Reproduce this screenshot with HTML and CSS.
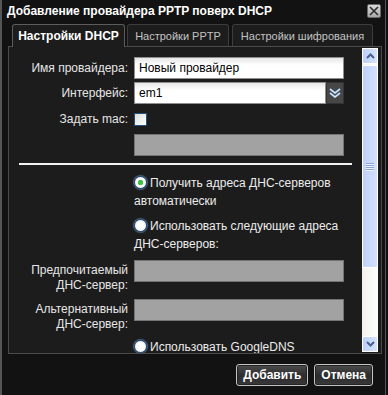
FILE: index.html
```html
<!DOCTYPE html>
<html lang="ru">
<head>
    <meta charset="UTF-8">
    <title>Добавление провайдера PPTP поверх DHCP</title>
    <link rel="stylesheet" href="styles.css">
</head>
<body>
    <div class="dialog">
        <div class="titlebar">
            <span class="title">Добавление провайдера PPTP поверх DHCP</span>
            <span class="close">
                <svg width="12" height="12" viewBox="0 0 12 12">
                    <path d="M2 2 L10 10 M10 2 L2 10" stroke="#2b2b2b" stroke-width="1.6" fill="none"/>
                </svg>
            </span>
        </div>

        <div class="tabs">
            <div class="tab active tab-dhcp">Настройки DHCP</div>
            <div class="tab tab-pptp">Настройки PPTP</div>
            <div class="tab tab-crypt">Настройки шифрования</div>
        </div>

        <div class="panel">
            <div class="content">
                <div class="row">
                    <label>Имя провайдера:</label>
                    <div class="input">Новый провайдер</div>
                </div>
                <div class="row">
                    <label>Интерфейс:</label>
                    <div class="select">
                        <div class="input select-value">em1</div>
                        <span class="select-btn">
                            <svg width="12" height="10" viewBox="0 0 12 10">
                                <path d="M1 1 L6 5 L11 1 M1 5 L6 9 L11 5" stroke="#9cc3ee" stroke-width="2" fill="none"/>
                                <path d="M1 1 L6 5 L11 1 M1 5 L6 9 L11 5" stroke="#ffffff" stroke-width="0.7" fill="none"/>
                            </svg>
                        </span>
                    </div>
                </div>
                <div class="row row-check">
                    <label>Задать mac:</label>
                    <span class="checkbox"></span>
                </div>
                <div class="row">
                    <label></label>
                    <div class="input disabled"></div>
                </div>

                <hr class="divider">

                <div class="row row-option">
                    <label></label>
                    <div class="option"><span class="radio checked"></span>Получить адреса ДНС-серверов автоматически</div>
                </div>
                <div class="row row-option">
                    <label></label>
                    <div class="option"><span class="radio"></span>Использовать следующие адреса ДНС-серверов:</div>
                </div>
                <div class="row row-tall">
                    <label>Предпочитаемый ДНС-сервер:</label>
                    <div class="input disabled"></div>
                </div>
                <div class="row row-tall">
                    <label>Альтернативный ДНС-сервер:</label>
                    <div class="input disabled"></div>
                </div>
                <div class="row row-option">
                    <label></label>
                    <div class="option"><span class="radio"></span>Использовать GoogleDNS</div>
                </div>
            </div>

            <div class="scrollbar">
                <span class="sb-btn">
                    <svg width="9" height="6" viewBox="0 0 9 6">
                        <path d="M1 5 L4.5 1.5 L8 5" stroke="#4d6185" stroke-width="2" fill="none"/>
                    </svg>
                </span>
                <div class="sb-thumb">
                    <span class="grip"></span>
                </div>
                <div class="sb-track"></div>
                <span class="sb-btn">
                    <svg width="9" height="6" viewBox="0 0 9 6">
                        <path d="M1 1 L4.5 4.5 L8 1" stroke="#4d6185" stroke-width="2" fill="none"/>
                    </svg>
                </span>
            </div>
        </div>

        <div class="footer">
            <button>Добавить</button>
            <button>Отмена</button>
        </div>
    </div>
</body>
</html>
```

FILE: styles.css
```css
* {
    box-sizing: border-box;
    margin: 0;
    padding: 0;
}

body {
    background: #111;
    font-family: 'Liberation Sans', sans-serif;
    font-size: 12px;
    color: #e8e8e8;
}

.dialog {
    width: 386px;
    height: 395px;
    background: #121212;
    border-left: 2px solid #555;
    border-right: 1px solid #555;
    display: flex;
    flex-direction: column;
}

/* title */

.titlebar {
    height: 24px;
    padding: 0 4px 2px 5px;
    display: flex;
    align-items: center;
    justify-content: space-between;
}

.title {
    font-weight: bold;
    font-size: 12px;
    color: #fff;
}

.close {
    width: 14px;
    height: 14px;
    border: 1px solid #6a6a6a;
    border-radius: 2px;
    background: linear-gradient(#d8d8d8, #a8a8a8);
    display: flex;
    align-items: center;
    justify-content: center;
}

/* tabs */

.tabs {
    height: 22px;
    padding-left: 10px;
    display: flex;
    gap: 2px;
    position: relative;
    z-index: 1;
}

.tab {
    height: 22px;
    border: 1px solid #3c3c3c;
    border-bottom: none;
    border-radius: 3px 3px 0 0;
    background: #1d1d1d;
    color: #c4c4c4;
    font-size: 11px;
    white-space: nowrap;
    display: flex;
    align-items: center;
    justify-content: center;
}

.tab.active {
    height: 23px;
    border-color: #5c5c5c;
    background: #1c1c1c;
    color: #fff;
    font-size: 12px;
    font-weight: bold;
}

.tab-dhcp {
    width: 113px;
}

.tab-pptp {
    width: 102px;
}

.tab-crypt {
    width: 141px;
    margin-left: 1px;
}

/* panel */

.panel {
    height: 308px;
    margin: 0 3px 0 6px;
    border: 1px solid #4a4a4a;
    background: #1c1c1c;
    display: flex;
}

.content {
    flex: 1;
    overflow: hidden;
    padding-top: 10px;
}

.row {
    display: grid;
    grid-template-columns: 119px 210px;
    column-gap: 6px;
    align-items: center;
    margin-bottom: 3px;
}

.row label {
    text-align: right;
    color: #e6e6e6;
}

.row-check {
    height: 24px;
}

.row-tall {
    align-items: start;
    margin-bottom: 6px;
}

.row-tall label {
    padding-top: 3px;
    line-height: 15px;
}

.row-option {
    align-items: start;
    margin-bottom: 7px;
}

.input {
    height: 22px;
    padding: 0 4px;
    border: 1px solid #8e8e8e;
    background: linear-gradient(#e6e6e6, #fff 35%);
    color: #000;
    font-size: 12px;
    display: flex;
    align-items: center;
}

.input.disabled {
    background: #a2a2a2;
    border-color: #747474;
}

.select {
    display: flex;
}

.select-value {
    flex: 1;
}

.select-btn {
    width: 18px;
    height: 22px;
    background: #474747;
    border: 1px solid #333;
    display: flex;
    align-items: center;
    justify-content: center;
}

.checkbox {
    width: 13px;
    height: 13px;
    border: 1px solid #1c5180;
    background: linear-gradient(135deg, #dcdcd7, #fff);
}

.divider {
    border: none;
    height: 2px;
    background: #f2f2f2;
    margin: 7px 10px 9px 10px;
}

.option {
    line-height: 18px;
    color: #ececec;
}

.radio {
    display: inline-block;
    width: 13px;
    height: 13px;
    margin-right: 3px;
    vertical-align: -2px;
    border-radius: 50%;
    border: 1px solid #2f5a8a;
    background: radial-gradient(circle, #fff 40%, #dadada);
    box-shadow: 0 0 1px 1px #49627e;
}

.radio.checked {
    background: radial-gradient(circle, #3fc13f 0 2.5px, #ffffff 3px 45%, #dadada);
}

/* scrollbar */

.scrollbar {
    width: 16px;
    margin: 1px 3px 1px 0;
    display: flex;
    flex-direction: column;
    background: linear-gradient(to right, #f3f1ec, #fefefe);
}

.sb-btn {
    height: 16px;
    border: 1px solid #fff;
    border-radius: 2px;
    background: linear-gradient(to right, #bcd0fb, #d6e2fd);
    display: flex;
    align-items: center;
    justify-content: center;
}

.sb-thumb {
    height: 203px;
    margin-top: 1px;
    border: 1px solid #fff;
    border-radius: 2px;
    background: linear-gradient(to right, #bfd1fb, #d4e0fd);
    display: flex;
    align-items: center;
    justify-content: center;
}

.grip {
    width: 8px;
    height: 8px;
    background: repeating-linear-gradient(#8aa5e0 0 1px, #eef3ff 1px 2px);
}

.sb-track {
    flex: 1;
}

/* footer */

.footer {
    display: flex;
    justify-content: flex-end;
    gap: 6px;
    padding: 10px 12px 0 0;
}

button {
    height: 22px;
    padding: 0 6px;
    border: 1px solid #c4c4c4;
    border-radius: 3px;
    background: linear-gradient(#4c4c4c, #2c2c2c 55%, #3a3a3a);
    box-shadow: inset 0 0 0 1px #222;
    color: #fff;
    font-family: 'Liberation Sans', sans-serif;
    font-size: 12px;
    font-weight: bold;
}
```
